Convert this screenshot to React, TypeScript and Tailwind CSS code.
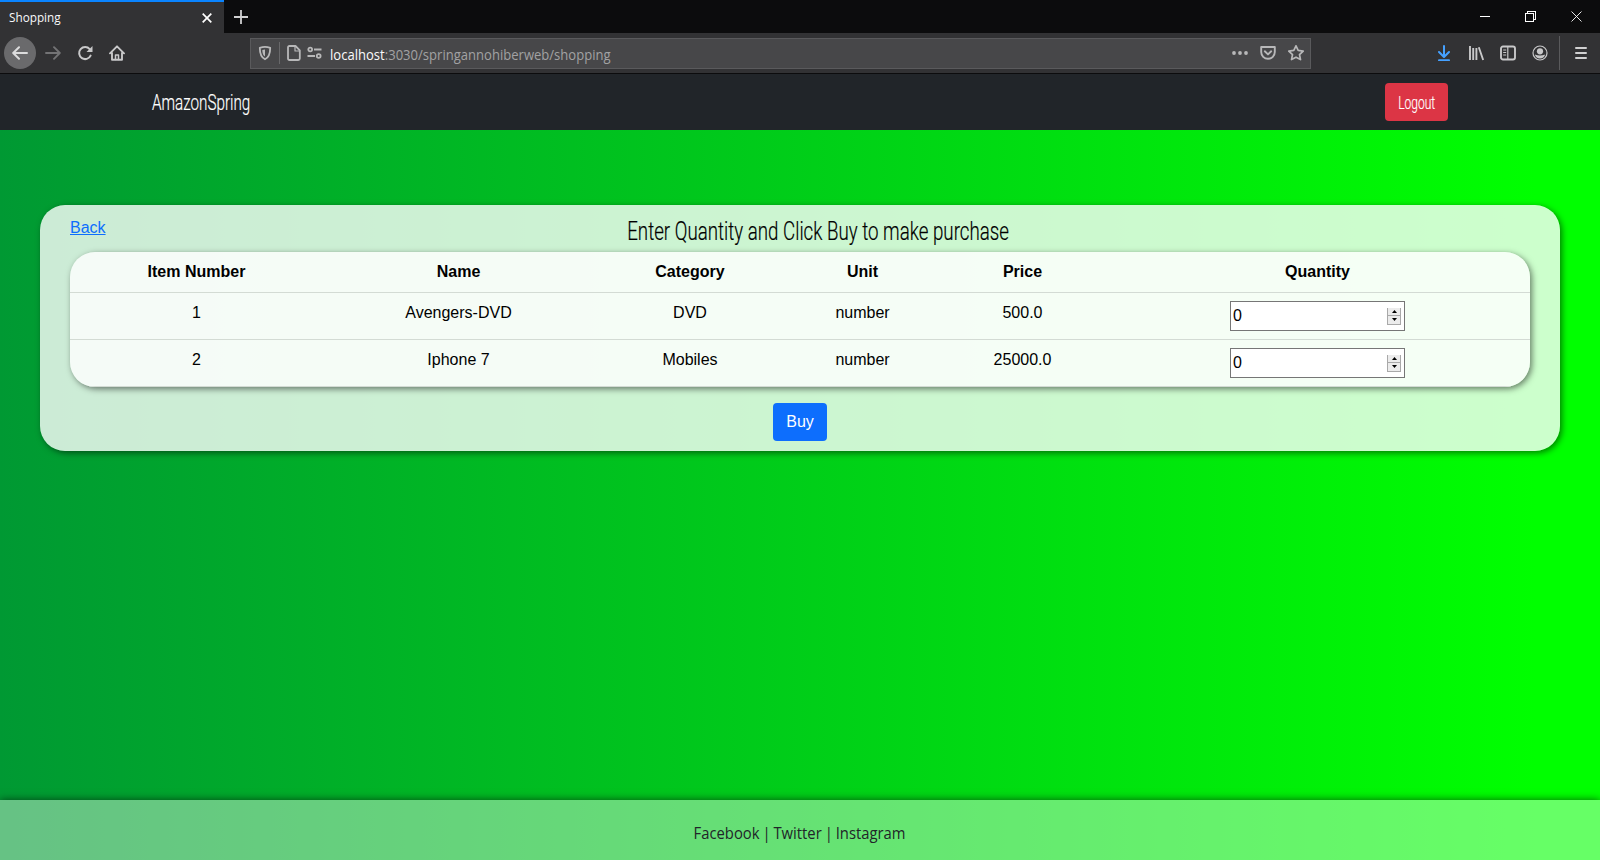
import { useState } from "react";

const items = [
  { id: 1, name: "Avengers-DVD", category: "DVD", unit: "number", price: "500.0" },
  { id: 2, name: "Iphone 7", category: "Mobiles", unit: "number", price: "25000.0" },
];

const columns = "grid grid-cols-[253px_271px_192px_153px_167px_423px] text-center border-b border-[#d3dbd4]";

function TabStrip() {
  return (
    <div className="flex h-[33px] bg-[#0c0c0d]">
      <div className="flex w-[224px] items-center justify-between border-t-2 border-[#0a84ff] bg-[#323234] pl-[9px] pr-3 pt-px text-[12px] text-[#f9f9fa]">
        <span className="inline-block origin-left scale-x-[0.98]">Shopping</span>
        <svg className="size-[10px]" viewBox="0 0 10 10" stroke="#fff" strokeWidth="1.7">
          <path d="M.7.7l8.6 8.6M9.3.7L.7 9.3" />
        </svg>
      </div>
      <div className="flex flex-1 items-center pl-[10px]">
        <svg className="size-[14px]" viewBox="0 0 14 14" stroke="#d0d0d1" strokeWidth="1.8">
          <path d="M7 0v14M0 7h14" />
        </svg>
      </div>
      <div className="flex items-center gap-[35px] pr-[18px]">
        <svg className="size-[11px]" viewBox="0 0 11 11" stroke="#fff" shapeRendering="crispEdges">
          <path d="M.5 5.5h10" />
        </svg>
        <svg className="size-[11px]" viewBox="0 0 11 11" fill="none" stroke="#fff" shapeRendering="crispEdges">
          <path d="M.5 2.5h7.5v8H.5zM2.5 2.5v-2h8v7.500H8" />
        </svg>
        <svg className="size-[11px]" viewBox="0 0 11 11" stroke="#fff" strokeWidth="0.9">
          <path d="M.5.5l10 10M10.500.5l-10 10" />
        </svg>
      </div>
    </div>
  );
}

function UrlBar() {
  return (
    <div className="flex h-[31px] w-[1061px] items-center border border-[#5a5a5c] bg-[#474749] pl-[6px] pr-[6px]">
      <svg className="size-4" viewBox="0 0 16 16" fill="none" stroke="#b8b8b9" strokeWidth="1.800">
        <path d="M8 1.800c-2 0-3.600.400-5.200 1 0 5 .6 9.300 5.200 11.500 4.600-2.200 5.200-6.500 5.200-11.500-1.600-.6-3.200-1-5.200-1z" strokeLinejoin="round" />
        <path d="M8 4.400v7.200C6 10 5.400 8 5.300 4.900z" fill="#b8b8b9" stroke="none" />
      </svg>
      <div className="ml-[6px] h-[22px] w-px bg-[#68686a]" />
      <svg className="ml-[6px] size-4" viewBox="0 0 16 16" fill="none" stroke="#b8b8b9" strokeWidth="1.800" strokeLinejoin="round">
        <path d="M3.500 1h6L13.800 5.300V13.500q0 1.500-1.500 1.500H3.500Q2 15 2 13.500V2.500Q2 1 3.500 1z" />
        <path d="M9 1v5h4.800" strokeWidth="1.200" />
      </svg>
      <svg className="ml-[5px] h-[14px] w-[15px]" viewBox="0 0 15 14" fill="none" stroke="#b8b8b9" strokeWidth="1.800">
        <circle cx="3.200" cy="3.500" r="1.900" />
        <path d="M7 3.500h7.500M.5 10h7.500" />
        <circle cx="11.700" cy="10" r="1.900" />
      </svg>
      <span className="ml-2 mt-[2px] inline-block origin-left scale-x-[0.933] whitespace-nowrap text-[14px] text-[#a2a2a3]">
        <span className="text-[#f9f9fa]">localhost</span>:3030/springannohiberweb/shopping
      </span>
      <div className="ml-auto flex items-center gap-[12px]">
        <svg className="size-4" viewBox="0 0 16 16" fill="#b8b8b9">
          <circle cx="2" cy="8" r="1.900" />
          <circle cx="8" cy="8" r="1.900" />
          <circle cx="14" cy="8" r="1.900" />
        </svg>
        <svg className="size-4" viewBox="0 0 16 16" fill="none" stroke="#b8b8b9" strokeWidth="1.900" strokeLinecap="round" strokeLinejoin="round">
          <path d="M1.200 2h13.600v5a6.800 6.800 0 0 1-13.600 0z" />
          <path d="M4.800 6.300L8 9.400l3.200-3.100" />
        </svg>
        <svg className="size-4" viewBox="0 0 16 16" fill="none" stroke="#b8b8b9" strokeWidth="1.700" strokeLinejoin="round">
          <path d="M8 .8l2.200 4.600 5 .7-3.700 3.500 1 5L8 12.200l-4.500 2.400 1-5L.8 6.100l5-.7z" />
        </svg>
      </div>
    </div>
  );
}

function Toolbar() {
  return (
    <div className="flex h-[41px] items-center border-b border-[#0c0c0d] bg-[#323234] pl-1">
      <div className="flex size-8 items-center justify-center rounded-full bg-[#6a6a6c]">
        <svg className="size-4" viewBox="0 0 16 16" fill="none" stroke="#dcdcdd" strokeWidth="2" strokeLinecap="round" strokeLinejoin="round">
          <path d="M15 8H1.300M7 2.200L1.200 8 7 13.800" />
        </svg>
      </div>
      <svg className="ml-[9px] size-4" viewBox="0 0 16 16" fill="none" stroke="#737375" strokeWidth="1.900" strokeLinecap="round" strokeLinejoin="round">
        <path d="M1 8h13.700M9 2.200L14.800 8 9 13.800" />
      </svg>
      <svg className="ml-4 size-4" viewBox="0 0 16 16" fill="none" stroke="#c8c8c9" strokeWidth="2">
        <path d="M13.600 10.600A6 6 0 1 1 12.700 4.200" strokeLinecap="round" />
        <path d="M15.500 1v6h-6z" fill="#c8c8c9" stroke="none" />
      </svg>
      <svg className="ml-4 size-4" viewBox="0 0 16 16" fill="none" stroke="#c8c8c9" strokeWidth="1.900" strokeLinejoin="round" strokeLinecap="round">
        <path d="M1 8.300L8 1.300l7 7M3 8v6.800h10V8" />
        <path d="M6.500 14.500V10h3v4.500" strokeWidth="1.500" />
      </svg>
      <div className="ml-[125px]">
        <UrlBar />
      </div>
      <div className="ml-[125px] flex items-center gap-4">
        <svg className="size-4" viewBox="0 0 16 16" fill="none" stroke="#45a1ff" strokeWidth="2" strokeLinecap="round" strokeLinejoin="round">
          <path d="M8 1v10.500M3 7l5 5 5-5M3 15.200h10" />
        </svg>
        <svg className="size-4" viewBox="0 0 16 16" fill="none" stroke="#c8c8c9" strokeWidth="1.900">
          <path d="M2 1v14M5.200 3v12M8.400 3v12M10.800 2.200L15.200 15" />
        </svg>
        <svg className="size-4" viewBox="0 0 16 16" fill="none" stroke="#c8c8c9" strokeWidth="1.900">
          <rect x="1" y="1.500" width="14" height="13" rx="2" />
          <path d="M7.800 2v12" strokeWidth="1.200" />
          <path d="M3.200 5h3M3.200 7.500h3M3.200 10h3" strokeWidth="1" />
        </svg>
        <svg className="size-4" viewBox="0 0 16 16">
          <circle cx="8" cy="8" r="7" fill="none" stroke="#c8c8c9" strokeWidth="1.200" />
          <circle cx="8" cy="6.300" r="3.100" fill="#c8c8c9" />
          <path d="M2.800 9.500Q8 11.500 13.200 9.500Q12 13.500 8 13.600Q4 13.500 2.800 9.500z" fill="#c8c8c9" />
        </svg>
      </div>
      <div className="ml-[11px] h-[34px] w-px bg-[#5a5a5c]" />
      <svg className="ml-[14px] size-[14px]" viewBox="0 0 14 14" stroke="#d0d0d1" strokeWidth="2">
        <path d="M2 2h10M2 7h10M2 12h10" strokeLinecap="round" />
      </svg>
    </div>
  );
}

function QuantityInput() {
  const [value, setValue] = useState(0);
  return (
    <div className="mx-auto flex h-[30px] w-[175px] items-center justify-between border border-[#767676] bg-white pl-[2px] pr-[3px]">
      <span className="-mt-px">{value}</span>
      <div className="flex h-[17px] w-[14px] flex-col gap-px bg-[#a9a9a9] px-px pb-px">
        <button aria-label="Increase" onClick={() => setValue(value + 1)} className="flex flex-1 items-center justify-center bg-[#ececec]">
          <svg className="h-[3px] w-[5px]" viewBox="0 0 5 3"><path d="M0 3L2.500 0 5 3z" /></svg>
        </button>
        <button aria-label="Decrease" onClick={() => setValue(Math.max(0, value - 1))} className="flex flex-1 items-center justify-center bg-[#ececec]">
          <svg className="h-[3px] w-[5px]" viewBox="0 0 5 3"><path d="M0 0h5L2.500 3z" /></svg>
        </button>
      </div>
    </div>
  );
}

export default function App() {
  return (
    <div className="flex h-[860px] w-[1600px] flex-col overflow-hidden bg-[#009933] font-['Open_Sans','Noto_Sans',sans-serif]">
      <TabStrip />
      <Toolbar />
      <nav className="flex h-14 items-center justify-between bg-[#212529] px-[152px] font-['Roboto',sans-serif] font-light text-white [-webkit-text-stroke:0.2px]">
        <div className="w-[98px] pt-[2px]">
          <span className="inline-block origin-left scale-x-[0.677] whitespace-nowrap text-[22.500px]">AmazonSpring</span>
        </div>
        <button className="flex h-[38px] w-[63px] items-center justify-center rounded-[4px] bg-[#dc3545]">
          <span className="inline-block scale-x-[0.67] whitespace-nowrap text-[18px]">Logout</span>
        </button>
      </nav>
      <div className="flex flex-1 flex-col bg-[linear-gradient(to_right,#009933,#00ff00_96%)]">
        <main className="mx-10 mt-[75px] flex h-[246px] flex-col rounded-[25px] bg-white/80 px-[30px] font-['Liberation_Sans',Arial,sans-serif] text-[16px] leading-6 text-black shadow-[2px_2px_6px_rgba(0,0,0,0.5)]">
          <div className="flex h-[47px] pt-[11px]">
            <a href="#" className="h-6 text-[#0d6efd] underline">Back</a>
            <h1 className="flex flex-1 justify-center font-['Roboto',sans-serif] text-[26px] font-light leading-[30px] [-webkit-text-stroke:0.2px]">
              <span className="inline-block h-[30px] scale-x-[0.72] whitespace-nowrap">Enter Quantity and Click Buy to make purchase</span>
            </h1>
          </div>
          <div className="h-[135px] overflow-hidden rounded-[25px] bg-white/80 shadow-[2px_2px_6px_rgba(0,0,0,0.5)]">
            <div className={columns + " h-[41px] pt-2 font-bold"}>
              <span>Item Number</span>
              <span>Name</span>
              <span>Category</span>
              <span>Unit</span>
              <span>Price</span>
              <span>Quantity</span>
            </div>
            {items.map((item) => (
              <div key={item.id} className={columns + " h-[47px] pt-2"}>
                <span>{item.id}</span>
                <span>{item.name}</span>
                <span>{item.category}</span>
                <span>{item.unit}</span>
                <span>{item.price}</span>
                <QuantityInput />
              </div>
            ))}
          </div>
          <button className="mx-auto mt-4 h-[38px] w-[54px] rounded-[4px] bg-[#0d6efd] text-white">Buy</button>
        </main>
        <footer className="mt-auto flex h-[60px] items-center justify-center bg-white/40 pt-[6px] text-[16px] text-[#212529] shadow-[0_0_8px_rgba(0,0,0,0.6)]">
          <span className="inline-block scale-x-[0.925] whitespace-nowrap [word-spacing:-1px]">Facebook | Twitter | Instagram</span>
        </footer>
      </div>
    </div>
  );
}
